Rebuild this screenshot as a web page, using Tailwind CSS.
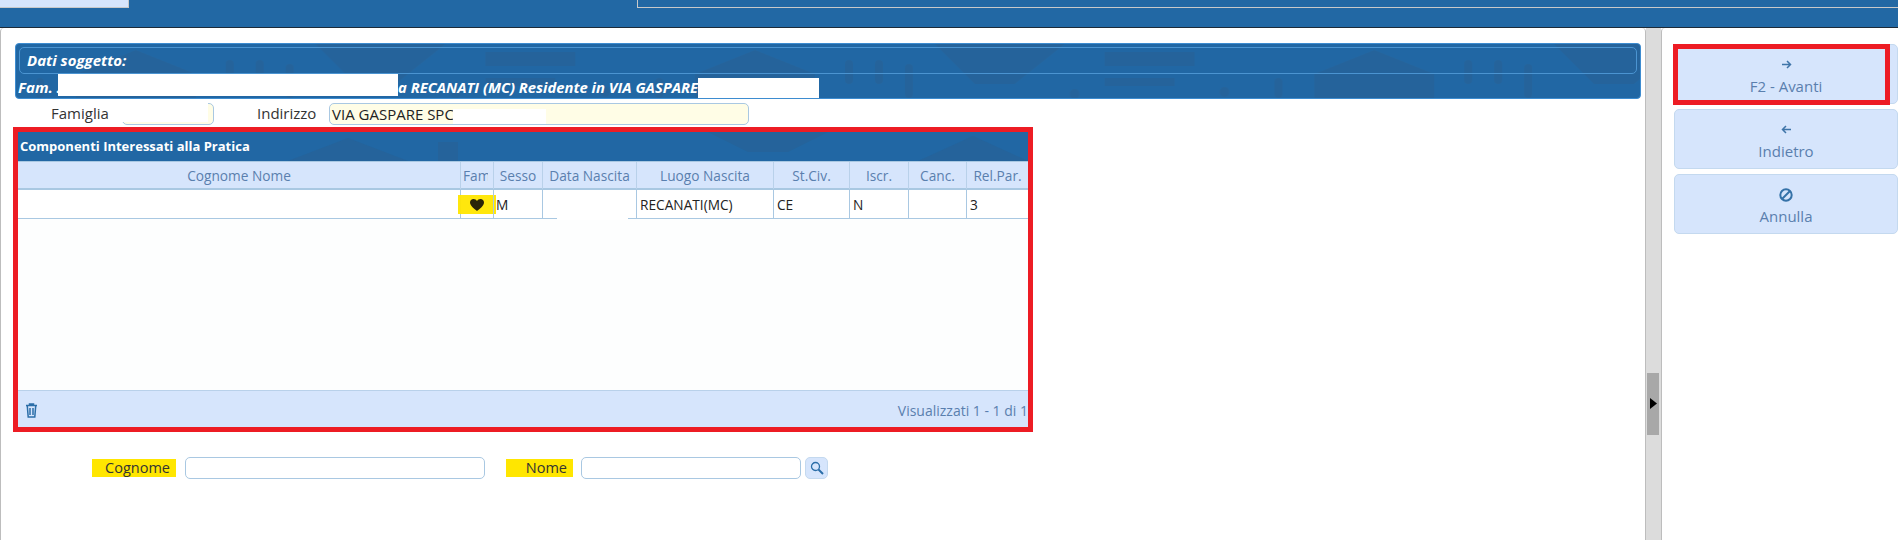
<!DOCTYPE html>
<html lang="it">
<head>
    <meta charset="UTF-8">
    <title>Componenti Interessati alla Pratica</title>
    <script src="https://cdn.jsdelivr.net/npm/@tailwindcss/browser@4"></script>
</head>
<body class="bg-white font-['Open_Sans',sans-serif] text-[14px] text-[#222]">
<div class="flex flex-col h-[540px] w-[1898px] overflow-hidden">

    <!-- Top tab bar -->
    <div class="flex h-[28px] shrink-0 bg-[#2268a4] border-b border-[#1d2b38]">
        <div class="w-[129px] h-[8px] bg-[#d6e5fc] border-r border-b border-[#c9c9c9]"></div>
        <div class="ml-[508px] flex-1 h-[8px] border-l border-b border-[#c9c9c9]"></div>
    </div>

    <div class="flex flex-1 min-h-0">
        <!-- Main panel -->
        <div class="w-[1646px] shrink-0 bg-white border-l border-r border-[#bdbdbd] rounded-tl-[4px] rounded-tr-[4px] pt-[15px] pl-[14px] pr-[4px]">
            <!-- Dati soggetto -->
            <div class="relative overflow-hidden h-[56px] bg-[#2167a4] rounded-[4px] border border-[#3d8cd0] text-white italic font-bold text-[15px]">
                <svg class="absolute inset-0 w-full h-full" viewBox="0 0 1626 56" preserveAspectRatio="xMinYMin slice">
                    <defs>
                        <pattern id="skyline" width="620" height="56" patternUnits="userSpaceOnUse">
                            <path d="M60 56 V30 L120 6 L180 30 V56Z M300 0 H430 L380 40 H340Z M470 8 H560 V22 H470Z M470 34 H540 V42 H470Z" fill="#2a5f92" fill-opacity="0.5"/>
                            <rect x="20" y="34" width="8" height="20" rx="4" fill="#2a5f92" fill-opacity="0.5"/>
                            <rect x="210" y="16" width="8" height="24" rx="4" fill="#2a5f92" fill-opacity="0.5"/>
                            <rect x="240" y="16" width="8" height="24" rx="4" fill="#2a5f92" fill-opacity="0.5"/>
                            <rect x="270" y="20" width="8" height="34" rx="4" fill="#2a5f92" fill-opacity="0.5"/>
                            <circle cx="440" cy="50" r="5" fill="#2a5f92" fill-opacity="0.5"/>
                            <circle cx="590" cy="48" r="5" fill="#2a5f92" fill-opacity="0.5"/>
                        </pattern>
                    </defs>
                    <rect width="1626" height="56" fill="url(#skyline)"/>
                </svg>
                <div class="relative mx-[3px] mt-[3px] h-[27px] border border-[#4b94d1] rounded-[5px] pl-[7px] leading-[25px]">Dati soggetto:</div>
                <div class="relative flex h-[22px] pl-[2px] leading-[26px]">
                    <span class="w-[40px] whitespace-nowrap overflow-hidden">Fam. .</span>
                    <span class="w-[340px] h-[22px] bg-white"></span>
                    <span class="w-[300px] whitespace-nowrap text-[14.8px]">a RECANATI (MC) Residente in VIA GASPARE</span>
                    <span class="relative w-[121px] h-[20px] mt-[4px] bg-white"></span>
                </div>
            </div>

            <!-- Famiglia / Indirizzo -->
            <div class="flex items-center h-[22px] mt-[4px] text-[15px] text-[#333]">
                <span class="ml-[36px] w-[71px] -mt-[2px]">Famiglia</span>
                <span class="relative w-[92px] h-[22px] bg-[#fffde6] border border-[#a9c8e2] rounded-[5px]">
                    <span class="absolute -left-[1px] -top-[1px] w-[86px] h-[19px] bg-white"></span>
                </span>
                <span class="ml-[43px] w-[72px] -mt-[2px]">Indirizzo</span>
                <div class="flex w-[420px] h-[22px] pl-[2px] bg-[#fffde6] border border-[#a9c8e2] rounded-[5px] leading-[21px]">
                    <span class="w-[121px] whitespace-nowrap text-[#222]">VIA GASPARE SPC</span>
                    <span class="w-[93px] mt-[5px] h-[15px] bg-white"></span>
                </div>
            </div>

            <!-- Componenti -->
            <div class="mt-[2px] -ml-[2px] w-[1020px] h-[305px] flex flex-col border-[5px] border-[#ed1c24]">
                <div class="relative overflow-hidden h-[29px] shrink-0 bg-[#2167a4] text-white font-bold text-[13px] leading-[29px] pl-[2px]">
                    <svg class="absolute inset-0 w-full h-full" viewBox="0 0 1010 29" preserveAspectRatio="xMinYMin slice">
                        <path d="M270 29 L330 6 L390 29Z M420 10 H440 V29 H420Z M690 0 H810 L770 20 H730Z M900 29 L955 4 L1010 29Z" fill="#2a5f92" fill-opacity="0.5"/>
                    </svg>
                    <span class="relative">Componenti Interessati alla Pratica</span>
                </div>
                <div class="grid grid-cols-[442px_33px_49px_94px_137px_76px_59px_58px_62px] h-[29px] shrink-0 bg-[#d6e5fc] border-t border-b-2 border-[#a9c8e2] text-[13.7px] text-[#5a7fae] text-center leading-[27px] whitespace-nowrap">
                    <div>Cognome Nome</div>
                    <div class="border-l border-[#b9d1ea] pl-[2px]"><div class="w-[25px] overflow-hidden text-left">Fam</div></div>
                    <div class="border-l border-[#b9d1ea]">Sesso</div>
                    <div class="border-l border-[#b9d1ea]">Data Nascita</div>
                    <div class="border-l border-[#b9d1ea]">Luogo Nascita</div>
                    <div class="border-l border-[#b9d1ea]">St.Civ.</div>
                    <div class="border-l border-[#b9d1ea]">Iscr.</div>
                    <div class="border-l border-[#b9d1ea]">Canc.</div>
                    <div class="border-l border-[#b9d1ea]">Rel.Par.</div>
                </div>
                <div class="grid grid-cols-[442px_33px_49px_94px_137px_76px_59px_58px_62px] h-[29px] shrink-0 border-b border-[#a9c8e2] text-[13.7px] leading-[29px] text-[#222] relative">
                    <div></div>
                    <div class="relative border-l border-[#a9c8e2]">
                        <div class="absolute -left-[3px] top-[5px] w-[38px] h-[19px] bg-[#ffe600]/95 flex items-center justify-center">
                            <svg class="w-[14px] h-[12px]" viewBox="0 0 14 12"><path d="M7 12 C5 10 0 7 0 3.4 C0 1.4 1.6 0 3.5 0 C5 0 6.3 .8 7 2 C7.7 .8 9 0 10.5 0 C12.4 0 14 1.4 14 3.4 C14 7 9 10 7 12Z" fill="#2a2408"/></svg>
                        </div>
                    </div>
                    <div class="border-l border-[#a9c8e2] pl-[2px] relative">M</div>
                    <div class="border-l border-[#a9c8e2] relative"><span class="absolute left-[14px] top-[10px] w-[71px] h-[20px] bg-white"></span></div>
                    <div class="border-l border-[#a9c8e2] pl-[3px]">RECANATI(MC)</div>
                    <div class="border-l border-[#a9c8e2] pl-[3px]">CE</div>
                    <div class="border-l border-[#a9c8e2] pl-[3px]">N</div>
                    <div class="border-l border-[#a9c8e2]"></div>
                    <div class="border-l border-[#a9c8e2] pl-[3px]">3</div>
                </div>
                <div class="flex-1 bg-[#fdfefe]"></div>
                <div class="flex items-center justify-between h-[37px] shrink-0 bg-[#d6e5fc] border-t border-[#b9d1ea] pl-[7px] text-[#5a7fae] whitespace-nowrap">
                    <svg class="w-[13px] h-[15px] mt-[3px]" viewBox="0 0 13 15" fill="none" stroke="#2b6ea8" stroke-width="1.5">
                        <path d="M1 2.6 H12 M4.5 2.4 V1 H8.5 V2.4"/>
                        <path d="M2.3 3 L3.2 14 H9.8 L10.7 3"/>
                        <path d="M5 5 V12 M8 5 V12"/>
                    </svg>
                    <span class="mt-[2px]">Visualizzati 1 - 1 di 1</span>
                </div>
            </div>

            <!-- Ricerca -->
            <div class="flex items-center h-[22px] mt-[25px] text-[14.5px] text-[#333]">
                <span class="ml-[77px] w-[84px] h-[18px] bg-[#ffe600] text-right pr-[6px] leading-[18px]">Cognome</span>
                <span class="ml-[9px] w-[300px] h-[22px] bg-white border border-[#a9c8e2] rounded-[5px]"></span>
                <span class="ml-[21px] w-[67px] h-[18px] bg-[#ffe600] text-right pr-[6px] leading-[18px]">Nome</span>
                <span class="ml-[8px] w-[220px] h-[22px] bg-white border border-[#a9c8e2] rounded-[5px]"></span>
                <span class="ml-[4px] w-[23px] h-[22px] bg-[#d6e5fc] border border-[#c4d9ef] rounded-[5px] flex items-center justify-center">
                    <svg class="w-[14px] h-[14px]" viewBox="0 0 14 14" fill="none" stroke="#2b6ea8"><circle cx="5.5" cy="5.5" r="4" stroke-width="1.3"/><path d="M8.5 8.5 L13 13" stroke-width="2"/></svg>
                </span>
            </div>
        </div>

        <!-- Splitter -->
        <div class="relative w-[15px] shrink-0 bg-[#dcdcdc]">
            <div class="absolute left-[1px] top-[345px] w-[12px] h-[62px] bg-[#a8a8a8]"></div>
            <svg class="absolute left-[4px] top-[370px] w-[7px] h-[11px]" viewBox="0 0 7 11"><path d="M0 0 L7 5.5 L0 11Z" fill="#000"/></svg>
        </div>

        <!-- Right panel -->
        <div class="flex-1 bg-white border-l border-[#bdbdbd] rounded-tl-[4px] pt-[16px] pl-[12px] flex flex-col gap-[5px] text-[15px] text-[#5a7fae]">
            <button class="relative flex flex-col items-center h-[60px] pt-[14px] bg-[#d6e5fc] border border-[#c4d9ef] rounded-[5px]">
                <svg class="w-[11px] h-[11px] mb-[6px]" viewBox="0 0 11 11" fill="none" stroke="#3f75a8" stroke-width="1.5"><path d="M1 5.5 H9.5 M6 2 L9.5 5.5 L6 9"/></svg>
                <span class="leading-[20px]">F2 - Avanti</span>
                <span class="absolute -left-[2px] -top-[1px] w-[217px] h-[61px] border-[5px] border-[#ed1c24]"></span>
            </button>
            <button class="flex flex-col items-center h-[60px] pt-[14px] bg-[#d6e5fc] border border-[#c4d9ef] rounded-[5px]">
                <svg class="w-[11px] h-[11px] mb-[6px]" viewBox="0 0 11 11" fill="none" stroke="#3f75a8" stroke-width="1.5"><path d="M10 5.5 H1.5 M5 2 L1.5 5.5 L5 9"/></svg>
                <span class="leading-[20px]">Indietro</span>
            </button>
            <button class="flex flex-col items-center h-[60px] pt-[13px] bg-[#d6e5fc] border border-[#c4d9ef] rounded-[5px]">
                <svg class="w-[14px] h-[14px] mb-[4px]" viewBox="0 0 14 14" fill="none" stroke="#3572a8" stroke-width="2"><circle cx="7" cy="7" r="5.7"/><path d="M3 11 L11 3"/></svg>
                <span class="leading-[20px]">Annulla</span>
            </button>
        </div>
    </div>
</div>
</body>
</html>
